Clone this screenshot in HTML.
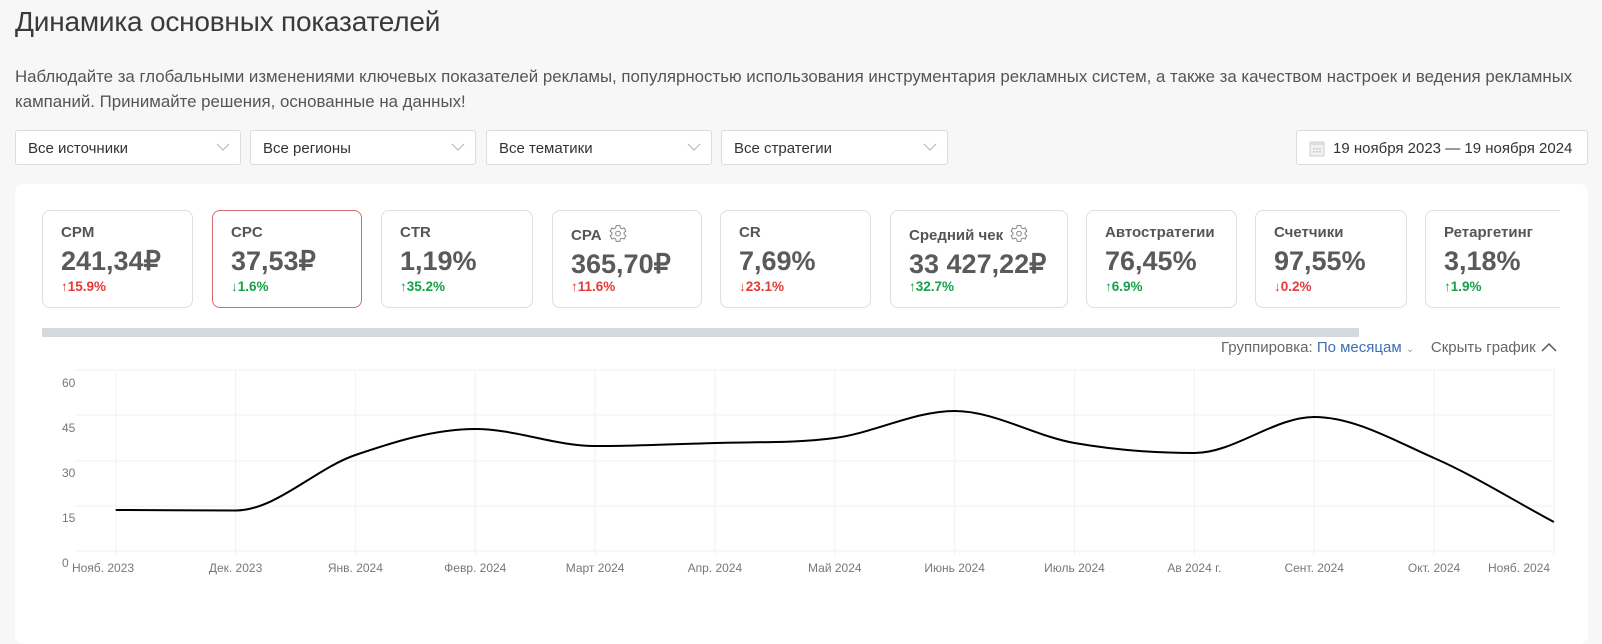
<!DOCTYPE html>
<html><head><meta charset="utf-8">
<style>
*{box-sizing:border-box;margin:0;padding:0}
body{width:1602px;height:626px;overflow:hidden;background:#f7f7f7;font-family:"Liberation Sans",Arial,sans-serif;color:#333;position:relative}
.abs{position:absolute}
h1{position:absolute;left:15px;top:6px;font-size:28px;font-weight:normal;color:#3a3a3a;letter-spacing:-0.2px}
p.d{position:absolute;left:15px;top:65px;width:1580px;font-size:16.85px;line-height:24.5px;color:#555}
.sel{position:absolute;top:130px;height:35px;background:#fff;border:1px solid #dcdcdc;border-radius:3px;font-size:15px;color:#333;padding:9px 12px}
.sel svg{position:absolute;right:10px;top:12px}
.card{position:absolute;left:15px;top:184px;width:1573px;height:460px;background:#fff;border-radius:9px}
.m{position:absolute;top:210px;height:98px;border:1px solid #dedede;border-radius:8px;background:#fff;padding:0 18px}
.m .l{position:absolute;left:18px;top:13px;font-size:15px;font-weight:bold;color:#555;white-space:nowrap}
.m .v{position:absolute;left:18px;top:35px;font-size:27px;font-weight:bold;color:#5a5a5a;white-space:nowrap}
.m .c{position:absolute;left:18px;top:68px;font-size:13.5px;font-weight:bold;white-space:nowrap}
.m .l svg{vertical-align:-4px;margin-left:6px}
.r{color:#e53935}.g{color:#17a04a}
.yl{position:absolute;left:62px;font-size:12px;color:#777}
.xl{position:absolute;top:561px;font-size:12px;color:#777;transform:translateX(-50%);white-space:nowrap}
</style></head><body>
<h1>Динамика основных показателей</h1>
<p class="d">Наблюдайте за глобальными изменениями ключевых показателей рекламы, популярностью использования инструментария рекламных систем, а также за качеством настроек и ведения рекламных кампаний. Принимайте решения, основанные на данных!</p>

<div class="sel" style="left:15px;width:226px">Все источники<svg width="14" height="9"><path d="M1 1l6 6 6-6" fill="none" stroke="#bbb" stroke-width="1.2"/></svg></div>
<div class="sel" style="left:250px;width:226px">Все регионы<svg width="14" height="9"><path d="M1 1l6 6 6-6" fill="none" stroke="#bbb" stroke-width="1.2"/></svg></div>
<div class="sel" style="left:486px;width:226px">Все тематики<svg width="14" height="9"><path d="M1 1l6 6 6-6" fill="none" stroke="#bbb" stroke-width="1.2"/></svg></div>
<div class="sel" style="left:721px;width:227px">Все стратегии<svg width="14" height="9"><path d="M1 1l6 6 6-6" fill="none" stroke="#bbb" stroke-width="1.2"/></svg></div>
<div class="sel" style="left:1296px;width:292px;padding-left:36px;font-size:15px">
<svg width="16" height="17" style="left:12px;top:9px;right:auto"><rect x="1" y="2" width="14" height="14" rx="1" fill="#f2f2f2" stroke="#ccc"/><rect x="1" y="2" width="14" height="3" fill="#ddd"/><g fill="#ccc"><rect x="4" y="8" width="2" height="1.5"/><rect x="7" y="8" width="2" height="1.5"/><rect x="10" y="8" width="2" height="1.5"/><rect x="4" y="11" width="2" height="1.5"/><rect x="7" y="11" width="2" height="1.5"/><rect x="10" y="11" width="2" height="1.5"/></g></svg>
19 ноября 2023 — 19 ноября 2024</div>

<div class="card"></div>

<svg width="0" height="0" style="position:absolute"><defs><g id="gear"><path d="M8.2 1.5h3.6l.5 2.3 1.6.9 2.2-.8 1.8 3.1-1.8 1.5v1.9l1.8 1.5-1.8 3.1-2.2-.8-1.6.9-.5 2.3H8.2l-.5-2.3-1.6-.9-2.2.8-1.8-3.1L3.9 10.5V8.6L2.1 7.1l1.8-3.1 2.2.8 1.6-.9z" fill="none" stroke="#888" stroke-width="1"/><circle cx="10" cy="9.6" r="2.4" fill="none" stroke="#888" stroke-width="1"/></g></defs></svg>

<div class="m" style="left:42px;width:151px"><div class="l">CPM</div><div class="v">241,34₽</div><div class="c r">↑15.9%</div></div>
<div class="m" style="left:212px;width:150px;border-color:#d2696a"><div class="l">CPC</div><div class="v">37,53₽</div><div class="c g">↓1.6%</div></div>
<div class="m" style="left:381px;width:152px"><div class="l">CTR</div><div class="v">1,19%</div><div class="c g">↑35.2%</div></div>
<div class="m" style="left:552px;width:150px"><div class="l">CPA<svg width="20" height="20"><use href="#gear"/></svg></div><div class="v" style="top:38px">365,70₽</div><div class="c r">↑11.6%</div></div>
<div class="m" style="left:720px;width:151px"><div class="l">CR</div><div class="v">7,69%</div><div class="c r">↓23.1%</div></div>
<div class="m" style="left:890px;width:178px"><div class="l">Средний чек<svg width="20" height="20"><use href="#gear"/></svg></div><div class="v" style="top:38px">33 427,22₽</div><div class="c g">↑32.7%</div></div>
<div class="m" style="left:1086px;width:151px"><div class="l">Автостратегии</div><div class="v">76,45%</div><div class="c g">↑6.9%</div></div>
<div class="m" style="left:1255px;width:152px"><div class="l">Счетчики</div><div class="v">97,55%</div><div class="c r">↓0.2%</div></div>
<div class="abs" style="left:1425px;top:210px;width:135px;height:98px;overflow:hidden"><div class="m" style="left:0;top:0;width:150px"><div class="l">Ретаргетинг</div><div class="v">3,18%</div><div class="c g">↑1.9%</div></div></div>

<div class="abs" style="left:42px;top:328px;width:1317px;height:9px;background:#d5d8dd"></div>

<div class="abs" style="left:1221px;top:339px;font-size:15px;color:#666;white-space:nowrap">Группировка: <span style="color:#3d6fb6">По месяцам</span> <span style="color:#999;font-size:10px">⌄</span>&nbsp;&nbsp;&nbsp; Скрыть график <svg width="16" height="10" style="margin-left:1px"><path d="M1 9l7-7 7 7" fill="none" stroke="#555" stroke-width="1.5"/></svg></div>

<svg class="abs" style="left:0;top:0" width="1602" height="626">
<g stroke="#eef3f3" stroke-width="1">
<line x1="75" y1="370" x2="1554" y2="370"/><line x1="75" y1="415" x2="1554" y2="415"/><line x1="75" y1="461" x2="1554" y2="461"/><line x1="75" y1="506" x2="1554" y2="506"/><line x1="75" y1="551" x2="1554" y2="551"/>
<g id="vl"></g>
</g>
<path id="cv" fill="none" stroke="#000" stroke-width="2"/>
</svg>
<div class="yl" style="top:376px">60</div><div class="yl" style="top:421px">45</div><div class="yl" style="top:466px">30</div><div class="yl" style="top:511px">15</div><div class="yl" style="top:556px">0</div>
<div id="xls"></div>
<script>
var xs=[],ys=[510,510.5,455,429,446,443,438,411,443,453,417,458,522];
var names=["Нояб. 2023","Дек. 2023","Янв. 2024","Февр. 2024","Март 2024","Апр. 2024","Май 2024","Июнь 2024","Июль 2024","Ав 2024 г.","Сент. 2024","Окт. 2024","Нояб. 2024"];
var vl="",xl="";
for(var i=0;i<13;i++){var x=115.7+i*119.85;xs.push(x);vl+='<line x1="'+x+'" y1="370" x2="'+x+'" y2="555"/>';
var cx=x;if(i==0)cx=103;if(i==12)cx=1519;xl+='<div class="xl" style="left:'+cx+'px">'+names[i]+'</div>';}
document.getElementById('vl').innerHTML=vl;document.getElementById('xls').innerHTML=xl;
var d="M"+xs[0]+" "+ys[0];
function sl(i){if(i==0)return (ys[1]-ys[0])/(xs[1]-xs[0])*0.3;if(i==12)return (ys[12]-ys[11])/(xs[12]-xs[11]);
var a=(ys[i]-ys[i-1]),b=(ys[i+1]-ys[i]);if(a*b<=0)return 0;return (a+b)/2/(xs[1]-xs[0]);}
for(var i=0;i<12;i++){var h=(xs[i+1]-xs[i])/3;d+=" C"+(xs[i]+h)+" "+(ys[i]+sl(i)*h)+" "+(xs[i+1]-h)+" "+(ys[i+1]-sl(i+1)*h)+" "+xs[i+1]+" "+ys[i+1];}
document.getElementById('cv').setAttribute('d',d);
</script>
</body></html>
